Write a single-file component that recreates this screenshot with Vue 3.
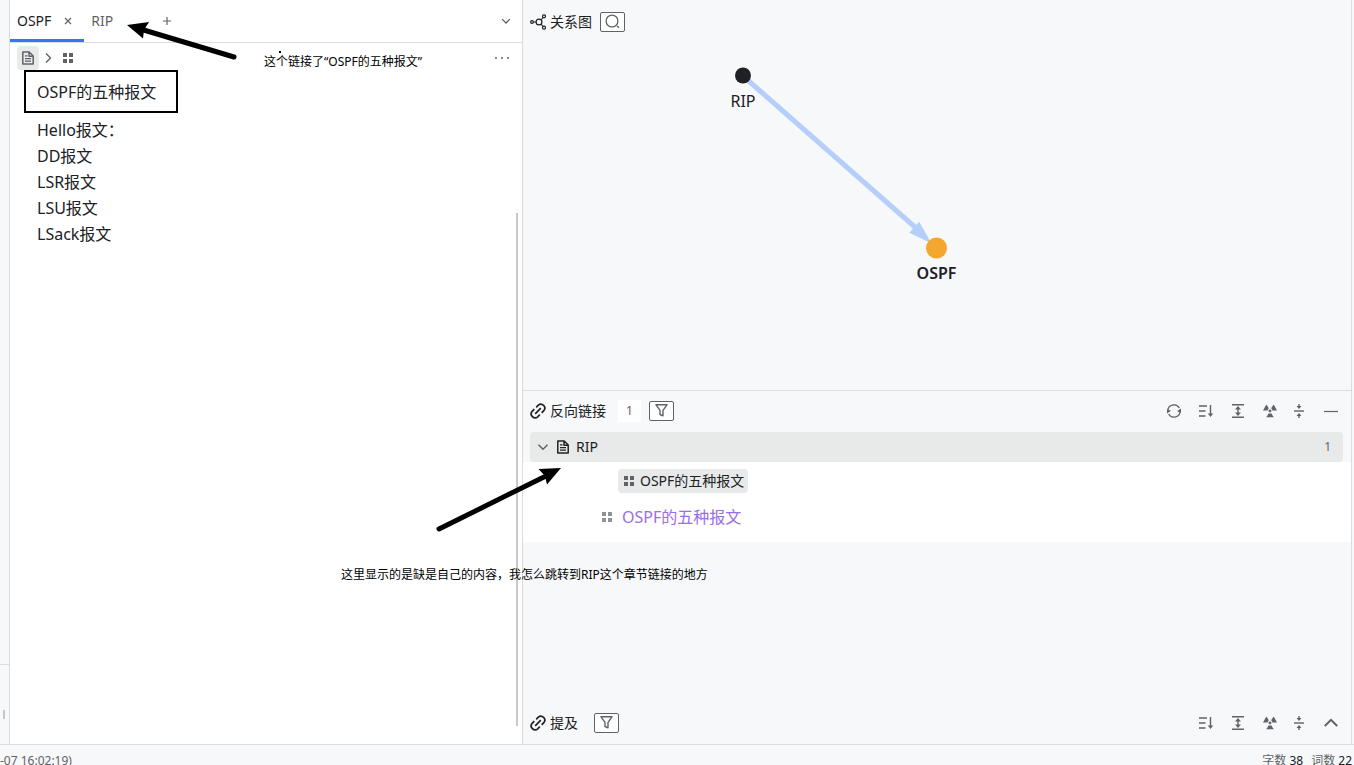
<template>
  <div class="app">
    <svg class="sprite" aria-hidden="true">
      <symbol id="icon-file" viewBox="0 0 14 14">
        <path d="M1.8 1h6.4l4 4v8H1.8z M8 1.2v4h4" fill="none" stroke="currentColor" stroke-width="1.5" stroke-linejoin="round" />
        <path d="M4 4.8h2.5M4 7.6h6M4 10.2h6" stroke="currentColor" stroke-width="1.3" />
      </symbol>
      <symbol id="icon-list" viewBox="0 0 10 10">
        <path d="M0 0h4v4H0zM6 0h4v4H6zM0 6h4v4H0zM6 6h4v4H6z" fill="currentColor" />
      </symbol>
      <symbol id="icon-right" viewBox="0 0 14 14">
        <path d="M5 2.5L9.5 7 5 11.5" fill="none" stroke="currentColor" stroke-width="1.4" />
      </symbol>
      <symbol id="icon-down" viewBox="0 0 14 14">
        <path d="M2.5 4.8L7 9.3l4.5-4.5" fill="none" stroke="currentColor" stroke-width="1.5" />
      </symbol>
      <symbol id="icon-graph" viewBox="0 0 16 16">
        <g fill="none" stroke="currentColor" stroke-width="1.2">
          <circle cx="2" cy="8" r="1.4" />
          <circle cx="9" cy="8" r="2.9" />
          <circle cx="14" cy="2.3" r="1.5" />
          <circle cx="14" cy="13.7" r="1.5" />
          <path d="M3.5 8H6M11 6l2-2.5M11 10l2 2.5" />
        </g>
      </symbol>
      <symbol id="icon-search" viewBox="0 0 16 16">
        <circle cx="7" cy="7" r="5.9" fill="none" stroke="currentColor" stroke-width="1.3" />
        <path d="M12 12l2 1.8" stroke="currentColor" stroke-width="1.4" />
      </symbol>
      <symbol id="icon-link" viewBox="0 0 16 16">
        <g fill="none" stroke="currentColor" stroke-width="1.7">
          <path d="M5.200 10.800l5.600-5.600" />
          <path d="M6.200 4.300L8.300 2.200a3.900 3.900 0 0 1 5.500 5.500l-2.100 2.100" />
          <path d="M9.800 11.700l-2.100 2.100a3.900 3.900 0 0 1-5.500-5.500l2.100-2.100" />
        </g>
      </symbol>
      <symbol id="icon-filter" viewBox="0 0 14 14">
        <path d="M1 .8h11L8 6.300v5.500l-3-1.300V6.300z" fill="none" stroke="currentColor" stroke-width="1.400" stroke-linejoin="round" />
      </symbol>
      <symbol id="icon-refresh" viewBox="0 0 14 14">
        <path d="M.9 7.500A6.100 6.100 0 0 1 12.300 4M13.100 6.500A6.100 6.100 0 0 1 1.700 10" fill="none" stroke="currentColor" stroke-width="1.300" />
        <path d="M14 4.500v4.300l-4-1.600zM0 9.500V5.200l4 1.600z" fill="currentColor" />
      </symbol>
      <symbol id="icon-sort" viewBox="0 0 14 14">
        <path d="M0 2h8M0 7h6.500M0 12h6.500M11.500 1v10" fill="none" stroke="currentColor" stroke-width="1.400" />
        <path d="M8.800 9.500h5.400L11.500 13z" fill="currentColor" />
      </symbol>
      <symbol id="icon-expand" viewBox="0 0 14 14">
        <path d="M1 .7h12M1 13.300h12M7 4v6" stroke="currentColor" stroke-width="1.400" />
        <path d="M4 5.500L7 2l3 3.500zM4 8.500L7 12l3-3.500z" fill="currentColor" />
      </symbol>
      <symbol id="icon-focus" viewBox="0 0 14 14">
        <path d="M3.300 .5L0 6.600h4.700c0-1 .5-1.800 1.200-2.300zM10.700 .5L14 6.600H9.300c0-1-.5-1.800-1.200-2.300zM3.300 13.300L5.800 9.200c.8.400 1.600.4 2.400 0l2.500 4.100z" fill="currentColor" />
        <circle cx="7" cy="6.900" r="1.400" fill="currentColor" />
      </symbol>
      <symbol id="icon-contract" viewBox="0 0 14 14">
        <path d="M2 7h10" stroke="currentColor" stroke-width="1.400" />
        <path d="M7 0v3M7 14v-3" stroke="currentColor" stroke-width="1.400" />
        <path d="M4.500 2h5L7 5zM4.500 12h5L7 9z" fill="currentColor" />
      </symbol>
      <symbol id="icon-min" viewBox="0 0 14 14">
        <path d="M0 7.500h14" stroke="currentColor" stroke-width="1.200" />
      </symbol>
      <symbol id="icon-up" viewBox="0 0 14 14">
        <path d="M.8 10L7 3.800l6.200 6.200" fill="none" stroke="currentColor" stroke-width="2" />
      </symbol>
    </svg>

    <main class="workspace">
      <aside class="dock">
        <div class="dock-top"></div>
        <div class="dock-bottom"><span class="dock-handle"></span></div>
      </aside>

      <section class="editor">
        <nav class="tabs">
          <div
            v-for="tab in tabs"
            :key="tab"
            class="tab"
            :class="{ active: tab === activeTab }"
          >
            <button class="tab-name" @click="activeTab = tab">{{ tab }}</button>
            <button class="tab-close" :aria-label="'关闭 ' + tab">
              <svg viewBox="0 0 8 8"><path d="M1 1l6 6M7 1L1 7" /></svg>
            </button>
          </div>
          <button class="tab-add" aria-label="新建">
            <svg viewBox="0 0 10 10"><path d="M5 1v8M1 5h8" /></svg>
          </button>
          <button class="tab-more" aria-label="切换页签">
            <svg class="icon"><use href="#icon-down" /></svg>
          </button>
        </nav>

        <div class="breadcrumb">
          <button class="crumb current" aria-label="文档">
            <svg class="icon"><use href="#icon-file" /></svg>
          </button>
          <svg class="icon arrow"><use href="#icon-right" /></svg>
          <button class="crumb" aria-label="列表">
            <svg class="icon-dots"><use href="#icon-list" /></svg>
          </button>
          <button class="more" aria-label="更多">
            <svg viewBox="0 0 16 4">
              <circle cx="2" cy="2" r="1" />
              <circle cx="8" cy="2" r="1" />
              <circle cx="14" cy="2" r="1" />
            </svg>
          </button>
        </div>

        <article class="doc">
          <p class="doc-head">OSPF的五种报文</p>
          <p v-for="line in lines" :key="line">{{ line }}</p>
        </article>
        <div class="scrollbar"></div>
      </section>

      <section class="side">
        <div class="graph">
          <header class="panel-head">
            <svg class="icon-lead"><use href="#icon-graph" /></svg>
            <span class="panel-title">关系图</span>
            <button class="box-btn" aria-label="搜索">
              <svg class="icon-search"><use href="#icon-search" /></svg>
            </button>
          </header>
          <svg class="graph-canvas">
            <path class="edge" d="M220 76L393 228" />
            <path class="edge-head" d="M406 241L388 232.5L396 223.5z" />
            <circle cx="220" cy="75.5" r="8" fill="#202124" />
            <circle cx="413.5" cy="248" r="10.5" fill="#f3a72e" />
            <text x="220" y="107">RIP</text>
            <text x="413.5" y="279" class="focus">OSPF</text>
          </svg>
        </div>

        <div class="backlinks">
          <header class="panel-head">
            <svg class="icon-lead"><use href="#icon-link" /></svg>
            <span class="panel-title">反向链接</span>
            <span class="count">1</span>
            <button class="box-btn" aria-label="筛选">
              <svg class="icon"><use href="#icon-filter" /></svg>
            </button>
            <div class="tools">
              <button v-for="name in ['refresh', ...tools]" :key="name" :aria-label="name">
                <svg class="icon"><use :href="'#icon-' + name" /></svg>
              </button>
            </div>
            <div class="tools tail">
              <button aria-label="折叠"><svg class="icon"><use href="#icon-contract" /></svg></button>
              <button aria-label="最小化"><svg class="icon"><use href="#icon-min" /></svg></button>
            </div>
          </header>

          <button class="ref-row">
            <svg class="icon muted"><use href="#icon-down" /></svg>
            <svg class="icon"><use href="#icon-file" /></svg>
            <span>RIP</span>
            <span class="ref-count">1</span>
          </button>
          <div class="ref-body">
            <button class="chip">
              <svg class="icon-dots"><use href="#icon-list" /></svg>
              OSPF的五种报文
            </button>
            <div class="ref-line">
              <svg class="icon-dots"><use href="#icon-list" /></svg>
              <a href="#ospf">OSPF的五种报文</a>
            </div>
          </div>
        </div>

        <header class="panel-head mention">
          <svg class="icon-lead"><use href="#icon-link" /></svg>
          <span class="panel-title">提及</span>
          <button class="box-btn" aria-label="筛选">
            <svg class="icon"><use href="#icon-filter" /></svg>
          </button>
          <div class="tools">
            <button v-for="name in tools" :key="name" :aria-label="name">
              <svg class="icon"><use :href="'#icon-' + name" /></svg>
            </button>
          </div>
          <div class="tools tail">
            <button aria-label="折叠"><svg class="icon"><use href="#icon-contract" /></svg></button>
            <button aria-label="展开"><svg class="icon"><use href="#icon-up" /></svg></button>
          </div>
        </header>
      </section>
      <aside class="dock-right"></aside>
    </main>

    <footer class="status">
      <span>-07 16:02:19)</span>
      <span class="stat">字数 <b>38</b></span>
      <span class="stat">词数 <b>22</b></span>
    </footer>

    <svg class="marks">
      <path class="mark-line" d="M142 29.5L234 57M546 476L439 529" />
      <path d="M127 25L149 22L144 30L143 38.5zM561 468L538.5 469L545 476L547 484.5z" />
      <path d="M279 51h2v2h-2z" />
    </svg>
    <p class="note note-top">这个链接了“OSPF的五种报文”</p>
    <p class="note note-bottom">这里显示的是缺是自己的内容，我怎么跳转到RIP这个章节链接的地方</p>
  </div>
</template>

<script setup>
import { ref } from "vue";

const tabs = ["OSPF", "RIP"];
const activeTab = ref("OSPF");

const lines = ["Hello报文：", "DD报文", "LSR报文", "LSU报文", "LSack报文"];

const tools = ["sort", "expand", "focus"];
</script>

<style>
body {
  margin: 0;
  overflow: hidden;
}
</style>

<style scoped>
.app {
  position: relative;
  display: flex;
  flex-direction: column;
  height: 100vh;
  overflow: hidden;
  background: #f6f8fa;
  color: #202124;
  font-family: "Noto Sans", "Noto Sans CJK SC", sans-serif;
  font-size: 14px;
  line-height: 18px;
}

.sprite {
  position: absolute;
  width: 0;
  height: 0;
}

button {
  display: flex;
  align-items: center;
  justify-content: center;
  padding: 0;
  border: none;
  background: none;
  color: inherit;
  font: inherit;
  cursor: pointer;
}

p {
  margin: 0;
}

svg {
  flex: none;
}

.icon {
  width: 14px;
  height: 14px;
}

.icon-lead,
.icon-search {
  width: 16px;
  height: 16px;
}

.icon-dots {
  width: 10px;
  height: 10px;
  color: #5f6368;
}

.workspace {
  display: flex;
  flex: 1;
  min-height: 0;
}

.dock {
  display: flex;
  flex-direction: column;
  width: 9px;
  border-right: 1px solid #dadce0;
}

.dock-top {
  flex: 1;
  border-bottom: 1px solid #dadce0;
}

.dock-bottom {
  height: 79px;
  padding: 45px 0 0 3px;
  box-sizing: border-box;
}

.dock-handle {
  display: block;
  width: 2px;
  height: 9px;
  background: #c4c6c8;
}

.dock-right {
  width: 2px;
  border-left: 1px solid #dadce0;
}

/* editor */
.editor {
  position: relative;
  flex: 512;
  background: #fff;
}

.tabs {
  display: flex;
  height: 42px;
  border-bottom: 1px solid #dadce0;
}

.tab {
  display: flex;
  align-items: center;
  height: 42px;
  padding: 0 7px;
  color: #5f6368;
}

.tab.active {
  box-shadow: inset 0 -3px #3575f0;
  color: #202124;
}

.tab-close {
  width: 18px;
  height: 18px;
  margin-left: 8px;
}

.tab:not(.active) .tab-close {
  visibility: hidden;
}

.tab-close svg {
  width: 8px;
  height: 8px;
}

.tab-close path,
.tab-add path {
  stroke: #5f6368;
  stroke-width: 1.2;
}

.tab-add {
  width: 42px;
  height: 42px;
}

.tab-add svg {
  width: 10px;
  height: 10px;
}

.tab-more {
  width: 32px;
  height: 42px;
  margin-left: auto;
  color: #5f6368;
}

.tab-more .icon {
  width: 12px;
  height: 12px;
}

.breadcrumb {
  display: flex;
  align-items: center;
  height: 30px;
  padding: 0 12px 0 7px;
  color: #5f6368;
}

.crumb {
  width: 22px;
  height: 24px;
  border-radius: 4px;
}

.crumb.current {
  background: #e8eaea;
}

.arrow {
  margin: 0 2px;
}

.more {
  margin-left: auto;
}

.more svg {
  width: 16px;
  height: 4px;
  fill: #5f6368;
}

.doc {
  padding: 6px 27px;
  font-size: 16px;
  line-height: 26px;
}

.doc-head {
  position: relative;
  width: max-content;
  margin-bottom: 12px;
}

.doc-head::after {
  content: "";
  position: absolute;
  inset: -9px -22px -8px -13px;
  border: 2px solid #000;
}

.scrollbar {
  position: absolute;
  top: 213px;
  right: 4px;
  bottom: 18px;
  width: 2px;
  background: #c8c8c8;
}

/* right side */
.side {
  display: flex;
  flex: 828;
  flex-direction: column;
  border-left: 1px solid #dadce0;
}

.graph {
  position: relative;
  height: 390px;
  border-bottom: 1px solid #dadce0;
}

.graph-canvas {
  position: absolute;
  inset: 0;
  width: 100%;
  height: 100%;
}

.graph-canvas text {
  fill: #202124;
  font-size: 16px;
  text-anchor: middle;
}

.graph-canvas .focus {
  font-weight: 600;
}

.edge {
  stroke: #b5cffa;
  stroke-width: 5;
}

.edge-head {
  fill: #b5cffa;
  stroke: #b5cffa;
  stroke-width: 2;
}

.panel-head {
  display: flex;
  align-items: center;
  height: 40px;
  padding: 0 13px 0 7px;
}

.graph .panel-head {
  height: 44px;
}

.panel-title {
  margin: 0 8px 0 4px;
}

.box-btn {
  position: relative;
  z-index: 1;
  box-sizing: border-box;
  width: 25px;
  height: 20px;
  border: 1px solid #5f6368;
  border-radius: 2px;
  background: #fff;
  color: #5f6368;
}

.count {
  width: 23px;
  margin: 0 8px 0 4px;
  background: #fff;
  color: #5f6368;
  font-size: 12px;
  line-height: 22px;
  text-align: center;
}

.tools {
  display: flex;
  gap: 18px;
  margin-left: auto;
  color: #5f6368;
}

.tools.tail {
  margin-left: 15px;
}

.backlinks {
  flex: 1;
}

.ref-row {
  box-sizing: border-box;
  justify-content: flex-start;
  gap: 6px;
  width: calc(100% - 15px);
  height: 30px;
  margin: 1px 8px 0 7px;
  padding: 0 12px 0 6px;
  border-radius: 4px;
  background: #e8eaea;
}

.muted {
  color: #5f6368;
}

.ref-count {
  margin-left: auto;
  color: #5f6368;
  font-size: 12px;
}

.ref-body {
  height: 80px;
  box-sizing: border-box;
  padding: 7px 79px;
  background: #fff;
}

.chip {
  gap: 6px;
  height: 24px;
  margin-left: 16px;
  padding: 0 4px 0 6px;
  border-radius: 4px;
  background: #e8eaea;
}

.ref-line {
  display: flex;
  align-items: center;
  gap: 10px;
  margin-top: 11px;
  font-size: 16px;
  line-height: 26px;
}

.ref-line .icon-dots {
  color: #8f9296;
}

.ref-line a {
  color: #9a6ee6;
  text-decoration: none;
}

.panel-head.mention {
  height: 42px;
}

.mention .panel-title {
  margin-right: 16px;
}

.status {
  display: flex;
  box-sizing: border-box;
  height: 21px;
  border-top: 1px solid #dadce0;
  color: #5f6368;
  font-size: 12px;
  line-height: 32px;
  white-space: nowrap;
}

.stat {
  margin-right: 8px;
}

.stat:nth-child(2) {
  margin-left: auto;
}

.stat:last-child {
  margin-right: 2px;
}

.stat b {
  color: #202124;
  font-weight: 400;
}

/* hand-drawn notes over the page */
.marks {
  position: absolute;
  inset: 0;
  z-index: 2;
  width: 100%;
  height: 100%;
  pointer-events: none;
}

.mark-line {
  stroke: #000;
  stroke-width: 5;
  stroke-linecap: round;
}

.note {
  position: absolute;
  z-index: 2;
  color: #000;
  font-size: 12px;
  line-height: 16px;
  white-space: nowrap;
}

.note-top {
  top: 54px;
  left: 264px;
}

.note-bottom {
  top: 567px;
  left: 341px;
}
</style>
